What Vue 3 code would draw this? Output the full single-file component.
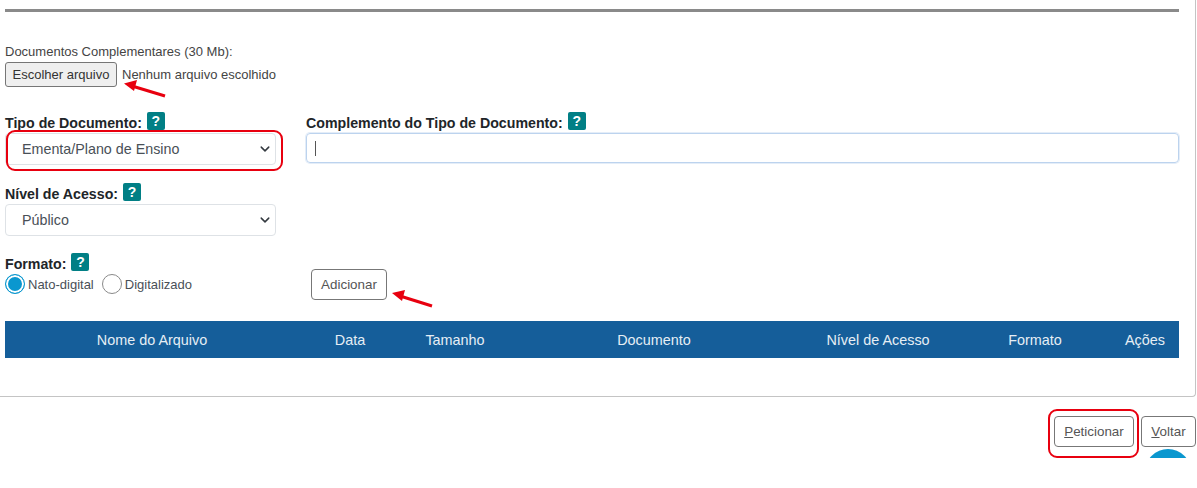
<script setup>
const columns = [
  { label: 'Nome do Arquivo', width: 294 },
  { label: 'Data', width: 102 },
  { label: 'Tamanho', width: 108 },
  { label: 'Documento', width: 290 },
  { label: 'Nível de Acesso', width: 158 },
  { label: 'Formato', width: 156 },
  { label: 'Ações', width: 64 },
]
</script>

<template>
  <div class="page">
    <div class="panel">
      <hr class="rule" />

      <div class="upload">
        <div class="upload-label">Documentos Complementares (30 Mb):</div>
        <div class="upload-row">
          <button class="file-btn">Escolher arquivo</button>
          <span class="file-name">Nenhum arquivo escolhido</span>
          <svg class="arrow arrow-file" width="44" height="20" viewBox="0 0 44 20">
            <path d="M42 17L9 7" stroke="#e8000f" stroke-width="3" fill="none" />
            <path d="M1 4.5L14 1L11 12Z" fill="#e8000f" />
          </svg>
        </div>
      </div>

      <div class="type-row">
        <div class="field field-type">
          <div class="field-label">Tipo de Documento: <span class="help">?</span></div>
          <div class="select-wrap">
            <select class="select">
              <option>Ementa/Plano de Ensino</option>
            </select>
            <span class="red-ring ring-select"></span>
          </div>
        </div>
        <div class="field field-extra">
          <div class="field-label">Complemento do Tipo de Documento: <span class="help">?</span></div>
          <div class="text-input"><span class="caret"></span></div>
        </div>
      </div>

      <div class="field field-access">
        <div class="field-label">Nível de Acesso: <span class="help">?</span></div>
        <select class="select">
          <option>Público</option>
        </select>
      </div>

      <div class="format-row">
        <div class="format">
          <div class="field-label">Formato: <span class="help">?</span></div>
          <div class="radios">
            <span class="radio radio-on"></span>
            <span class="radio-text">Nato-digital</span>
            <span class="radio"></span>
            <span class="radio-text">Digitalizado</span>
          </div>
        </div>
        <div class="add-wrap">
          <button class="btn add-btn">Adicionar</button>
          <svg class="arrow arrow-add" width="44" height="20" viewBox="0 0 44 20">
            <path d="M41 17L9 7" stroke="#e8000f" stroke-width="3" fill="none" />
            <path d="M1 4L14 1L11 12Z" fill="#e8000f" />
          </svg>
        </div>
      </div>

      <div class="table-head">
        <div
          v-for="col in columns"
          :key="col.label"
          class="th"
          :style="{ width: col.width + 'px' }"
        >{{ col.label }}</div>
      </div>
    </div>

    <div class="actions">
      <div class="action-wrap">
        <button class="btn action-btn btn-send"><u>P</u>eticionar</button>
        <span class="red-ring ring-send"></span>
      </div>
      <button class="btn action-btn btn-back"><u>V</u>oltar</button>
      <div class="chat-bubble"></div>
    </div>
  </div>
</template>

<style>
html, body {
  margin: 0;
  background: #fff;
}
</style>

<style scoped>
.page {
  width: 1197px;
  height: 488px;
  overflow: hidden;
  font-family: "Liberation Sans", Arial, sans-serif;
  color: #212529;
}

.panel {
  box-sizing: border-box;
  width: 1196px;
  height: 397px;
  padding: 9px 16px 0 5px;
  border-right: 1px solid #c4c4c4;
  border-bottom: 1px solid #c4c4c4;
  border-bottom-right-radius: 4px;
}

.rule {
  margin: 0;
  height: 3px;
  border: 0;
  background: #8a8a8a;
}

.upload {
  margin-top: 33px;
}

.upload-label {
  font-size: 13px;
  line-height: 14px;
  color: #444;
}

.upload-row {
  position: relative;
  display: flex;
  align-items: center;
  margin-top: 3px;
}

.file-btn {
  box-sizing: border-box;
  width: 112px;
  height: 25px;
  padding: 0;
  background: #efefef;
  border: 1px solid #767676;
  border-radius: 3px;
  font: 13px "Liberation Sans", Arial, sans-serif;
  color: #333;
}

.file-name {
  margin-left: 5px;
  font-size: 13px;
  color: #444;
}

.arrow {
  position: absolute;
}

.arrow-file {
  left: 118px;
  top: 17px;
}

.type-row {
  display: flex;
  gap: 30px;
  margin-top: 25px;
}

.field-label {
  box-sizing: border-box;
  display: flex;
  align-items: center;
  gap: 5px;
  height: 19px;
  padding-top: 2px;
  font-size: 14.2px;
  font-weight: 700;
}

.help {
  display: inline-block;
  width: 18px;
  height: 18px;
  margin-bottom: 4px;
  border-radius: 2px;
  background: #017f85;
  color: #fff;
  font-size: 14px;
  line-height: 18px;
  text-align: center;
}

.select-wrap {
  position: relative;
}

.select {
  display: block;
  box-sizing: border-box;
  width: 271px;
  height: 32px;
  margin-top: 2px;
  padding: 0 36px 0 16px;
  border: 1px solid #dee2e6;
  border-radius: 4px;
  background: #fff url("data:image/svg+xml,%3Csvg xmlns='http://www.w3.org/2000/svg' viewBox='0 0 16 16'%3E%3Cpath fill='none' stroke='%23343a40' stroke-linecap='round' stroke-linejoin='round' stroke-width='2.4' d='M2 5l6 6 6-6'/%3E%3C/svg%3E") no-repeat right 5px center / 10px 10px;
  appearance: none;
  font: 14.3px "Liberation Sans", Arial, sans-serif;
  color: #495057;
}

.red-ring {
  position: absolute;
  box-sizing: border-box;
  border: 2px solid #e8000f;
  border-radius: 9px;
  pointer-events: none;
}

.ring-select {
  left: 1px;
  top: -3px;
  width: 277px;
  height: 41px;
}

.field-extra {
  flex: 1;
}

.text-input {
  box-sizing: border-box;
  display: flex;
  align-items: center;
  height: 30px;
  margin-top: 2px;
  padding-left: 8px;
  border: 1px solid #bcd3ee;
  border-radius: 4px;
  box-shadow: 0 0 0 1px #e4edf8;
}

.caret {
  width: 1px;
  height: 15px;
  background: #555;
}

.field-access {
  margin-top: 18px;
}

.format-row {
  display: flex;
  margin-top: 17px;
}

.format {
  width: 306px;
}

.radios {
  display: flex;
  align-items: center;
  height: 22px;
  margin-top: 1px;
  font-size: 13px;
  color: #495057;
}

.radio {
  box-sizing: border-box;
  flex: none;
  width: 20px;
  height: 20px;
  border: 1px solid #8a8a8a;
  border-radius: 50%;
  background: #fff;
}

.radio-on {
  border: 1px solid #0a97cf;
  background: #0a97cf;
  box-shadow: inset 0 0 0 2px #fff;
}

.radio-text {
  margin: 0 8px 0 3px;
}

.add-wrap {
  position: relative;
  padding-top: 16px;
}

.btn {
  box-sizing: border-box;
  padding: 0;
  background: #fff;
  border: 1px solid #777;
  border-radius: 4px;
  font: 13.4px "Liberation Sans", Arial, sans-serif;
  color: #555;
}

.add-btn {
  display: block;
  width: 76px;
  height: 31px;
}

.arrow-add {
  left: 80px;
  top: 36px;
}

.table-head {
  display: flex;
  align-items: center;
  height: 37px;
  margin-top: 21px;
  background: #155e9a;
  color: #e6eef5;
  font-size: 14.4px;
}

.th {
  flex: none;
  text-align: center;
  white-space: nowrap;
}

.actions {
  position: relative;
  display: flex;
  justify-content: flex-end;
  gap: 7px;
  height: 61px;
  padding: 19px 1px 0 0;
  box-sizing: border-box;
  overflow: hidden;
}

.action-wrap {
  position: relative;
}

.action-btn {
  position: relative;
  z-index: 1;
  display: block;
  height: 31px;
}

.btn-send {
  width: 80px;
}

.btn-back {
  width: 55px;
}

.ring-send {
  left: -6px;
  top: -7px;
  width: 91px;
  height: 49px;
}

.chat-bubble {
  position: absolute;
  left: 1145px;
  top: 52px;
  width: 46px;
  height: 46px;
  border-radius: 50%;
  background: #0a97cf;
}
</style>
